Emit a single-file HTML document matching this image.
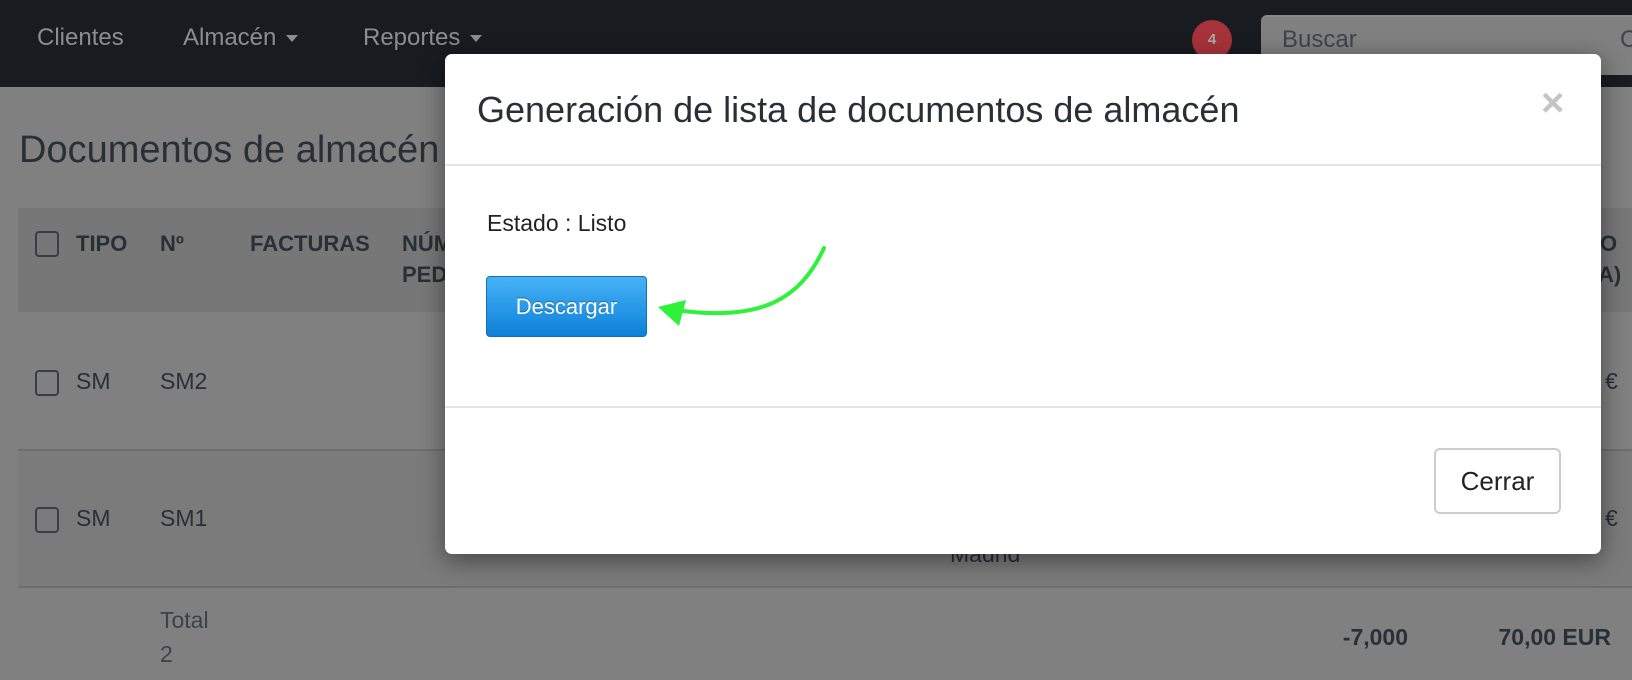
<!DOCTYPE html>
<html><head><meta charset="utf-8"><style>
*{margin:0;padding:0;box-sizing:border-box}
body{width:1632px;height:680px;overflow:hidden;background:#808080;font-family:"Liberation Sans",sans-serif;position:relative}
.a{position:absolute;white-space:nowrap}
.nav{position:absolute;left:0;top:0;width:1632px;height:87px;background:#181b20}
.nv{color:#8a8d91;font-size:24px}
.car{display:inline-block;border-left:6px solid transparent;border-right:6px solid transparent;border-top:7px solid #8a8d91;vertical-align:middle;margin-left:10px}
.dk{color:#2a2f36}
.th{font-weight:bold;font-size:22px;color:#2a2f36}
.td{font-size:23px;color:#2a2f36}
.cb{position:absolute;width:24px;height:26px;border:2px solid #3a3e44;border-radius:4px}
</style></head><body>
<div class="nav"></div>
<div class="a nv" style="left:37px;top:24px">Clientes</div>
<div class="a nv" style="left:183px;top:24px">Almacén<span class="car"></span></div>
<div class="a nv" style="left:363px;top:24px">Reportes<span class="car"></span></div>
<div class="a" style="left:1192px;top:20px;width:40px;height:40px;border-radius:50%;background:#a8333a;color:#aaa;font-size:15px;font-weight:bold;text-align:center;line-height:40px">4</div>
<div class="a" style="left:1261px;top:15px;width:380px;height:60px;background:#808080;border-radius:6px;border-top:2px solid #888"></div>
<div class="a" style="left:1282px;top:26px;font-size:24px;color:#404347">Buscar</div>
<div class="a" style="left:1620px;top:26px;font-size:24px;color:#404347">C</div>
<div class="a dk" style="left:19px;top:129px;font-size:38px">Documentos de almacén</div>
<div class="a" style="left:18px;top:208px;width:1614px;height:104px;background:#777"></div>
<div class="cb" style="left:35px;top:231px"></div>
<div class="a th" style="left:76px;top:231px">TIPO</div>
<div class="a th" style="left:160px;top:231px">Nº</div>
<div class="a th" style="left:250px;top:231px">FACTURAS</div>
<div class="a th" style="left:402px;top:231px">NÚM</div>
<div class="a th" style="left:402px;top:262px">PED</div>
<div class="a th" style="left:1600px;top:231px">O</div>
<div class="a th" style="left:1598px;top:262px">A)</div>
<div class="cb" style="left:35px;top:370px"></div>
<div class="a td" style="left:76px;top:368px">SM</div>
<div class="a td" style="left:160px;top:368px">SM2</div>
<div class="a td" style="left:1605px;top:368px">€</div>
<div class="a" style="left:18px;top:449px;width:1614px;height:2px;background:#6e6e6e"></div>
<div class="a" style="left:18px;top:451px;width:1614px;height:136px;background:#7b7b7b"></div>
<div class="cb" style="left:35px;top:507px"></div>
<div class="a td" style="left:76px;top:505px">SM</div>
<div class="a td" style="left:160px;top:505px">SM1</div>
<div class="a td" style="left:1605px;top:505px">€</div>
<div class="a td" style="left:950px;top:541px">Madrid</div>
<div class="a" style="left:18px;top:586px;width:1614px;height:2px;background:#6e6e6e"></div>
<div class="a td" style="left:160px;top:607px;color:#3e4247">Total</div>
<div class="a td" style="left:160px;top:641px;color:#3e4247">2</div>
<div class="a td" style="left:1308px;width:100px;text-align:right;top:624px;font-weight:bold">-7,000</div>
<div class="a td" style="left:1451px;width:160px;text-align:right;top:624px;font-weight:bold">70,00 EUR</div>

<div class="a" style="left:445px;top:54px;width:1156px;height:500px;background:#fff;border-radius:7px;box-shadow:0 6px 25px rgba(0,0,0,.45)">
  <div class="a" style="left:32px;top:35px;font-size:36px;color:#2a2f36">Generación de lista de documentos de almacén</div>
  <div class="a" style="left:1096px;top:27px;font-size:40px;font-weight:bold;color:#c4c4c4">×</div>
  <div class="a" style="left:0;top:110px;width:1156px;height:2px;background:#e5e5e5"></div>
  <div class="a" style="left:42px;top:156px;font-size:23px;color:#222">Estado : Listo</div>
  <div class="a" style="left:41px;top:222px;width:161px;height:61px;border:1px solid #1370b5;border-radius:4px;background:linear-gradient(#46b2f7,#0d80d8);color:#fff;font-size:22px;text-align:center;line-height:59px;text-shadow:0 -1px 0 rgba(0,0,0,.3)">Descargar</div>
  <div class="a" style="left:0;top:352px;width:1156px;height:2px;background:#e5e5e5"></div>
  <div class="a" style="left:989px;top:394px;width:127px;height:66px;border:2px solid #ccc;border-radius:6px;font-size:26px;color:#222;text-align:center;line-height:62px">Cerrar</div>
</div>
<svg class="a" style="left:0;top:0" width="1632" height="680">
<path d="M824 248 C800 300 760 322 676 310" fill="none" stroke="#2ef23a" stroke-width="4" stroke-linecap="round"/>
<polygon points="658,307 686,300 679,326" fill="#2ef23a"/>
</svg>
</body></html>
